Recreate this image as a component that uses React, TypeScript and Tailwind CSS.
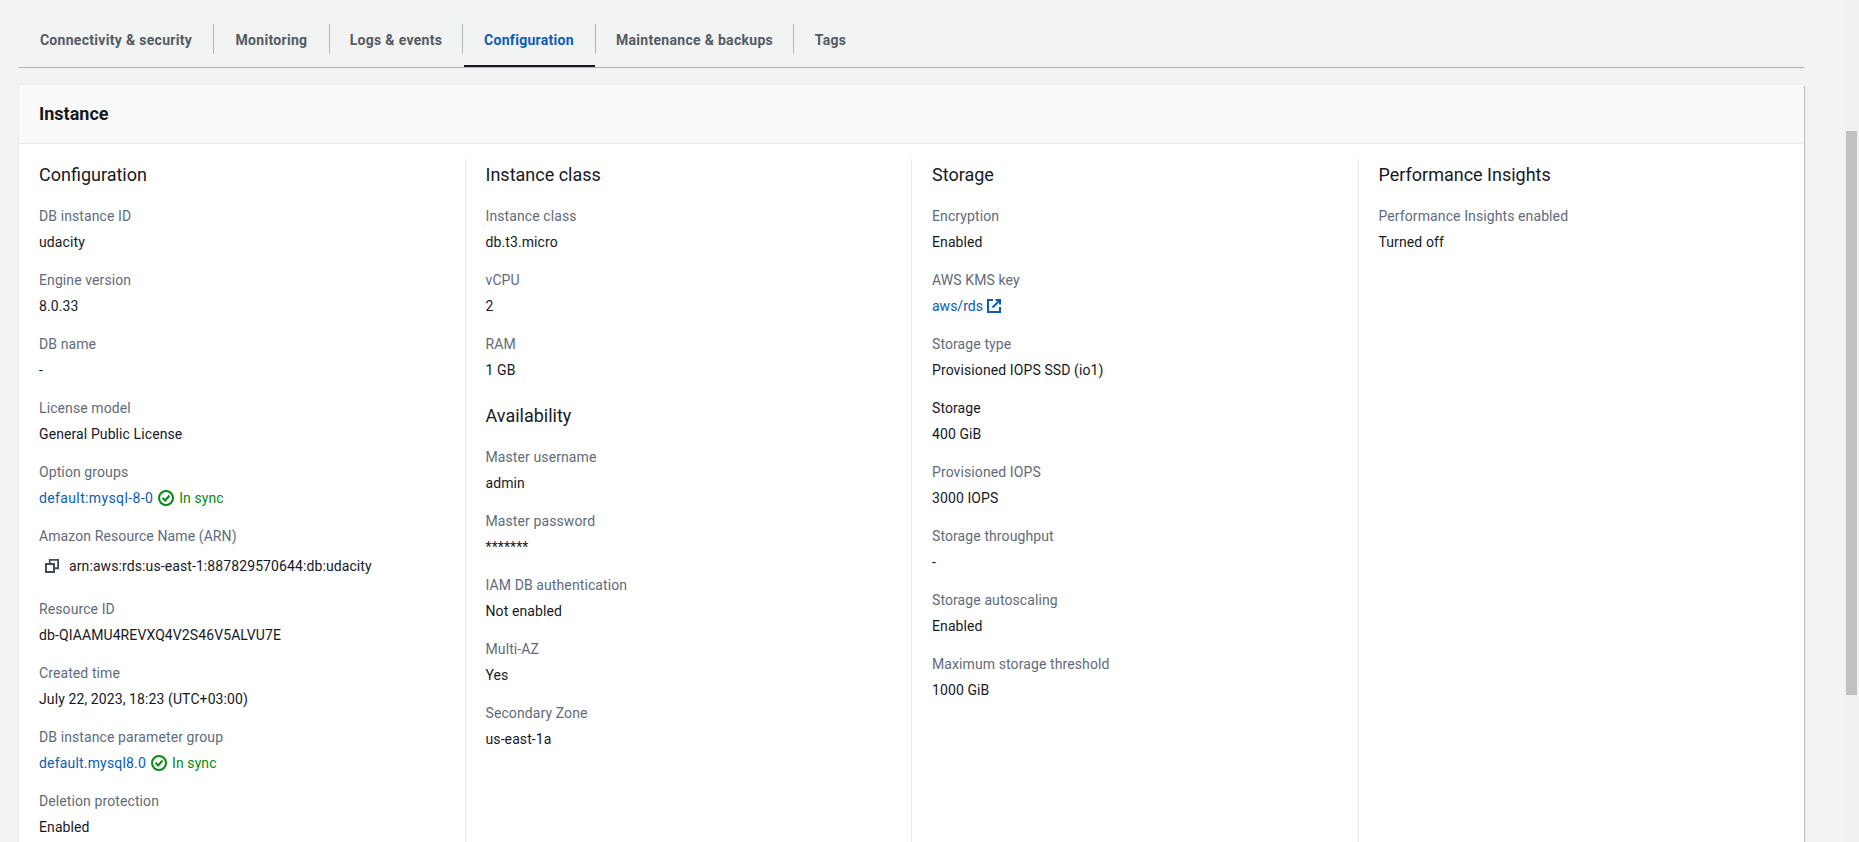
import React from "react";

const tabs: [string, string][] = [
  ["Connectivity & security", "w-[195px]"],
  ["Monitoring", "w-[116px]"],
  ["Logs & events", "w-[133px]"],
  ["Configuration", "w-[133px]"],
  ["Maintenance & backups", "w-[198px]"],
  ["Tags", "w-[73px]"],
];

function CheckIcon() {
  return (
    <svg width="16" height="16" viewBox="0 0 16 16" fill="none" stroke="#058a12" strokeWidth="2" className="shrink-0">
      <circle cx="8" cy="8" r="7" />
      <path d="M4.5 7.8 L7.2 10.5 L11.5 5.5" />
    </svg>
  );
}

function ExternalIcon() {
  return (
    <svg width="16" height="16" viewBox="0 0 16 16" fill="none" stroke="#0a5cb8" strokeWidth="2" className="shrink-0">
      <path d="M7 2 H2 V14 H14 V9" />
      <path d="M9.5 2 H14 V6.5" />
      <path d="M14 2 L6.5 9.5" />
    </svg>
  );
}

function CopyIcon() {
  return (
    <svg width="16" height="16" viewBox="0 0 16 16" fill="none" stroke="#414d5c" strokeWidth="2" className="shrink-0">
      <rect x="2" y="6" width="8" height="8" />
      <path d="M5.75 5 V1.9 H14.1 V10.25 H11" strokeWidth="1.8" />
    </svg>
  );
}

function Field({ label, children }: { label: string; children: React.ReactNode }) {
  return (
    <div className="mb-[18px]">
      <div className="mb-[6px] h-5 text-[#5f6b7a]">{label}</div>
      <div className="h-5 text-[#16191f]">{children}</div>
    </div>
  );
}

function Sync({ name, spacing }: { name: string; spacing: string }) {
  return (
    <div className="flex items-center">
      <span className={`text-[#0a5cb8] ${spacing}`}>{name}</span>
      <span className="mx-[5px]"><CheckIcon /></span>
      <span className="text-[#058a12]">In sync</span>
    </div>
  );
}

function Heading({ children, className = "" }: { children: React.ReactNode; className?: string }) {
  return (
    <h3 className={`mb-[15px] flex h-[32px] items-center text-[18px] leading-[22px] tracking-normal text-[#16191f] ${className}`}>
      {children}
    </h3>
  );
}

function Column({ children, last }: { children: React.ReactNode; last?: boolean }) {
  return (
    <div className={`min-w-0 flex-1 pl-5 pr-5 ${last ? "" : "border-r border-[#e9ebed]"}`}>{children}</div>
  );
}

export default function App() {
  return (
    <div
      className="flex h-[842px] w-full overflow-hidden bg-[#f2f3f3] text-[14px] leading-5 tracking-[0.1px]"
      style={{ fontFamily: "Roboto, sans-serif" }}
    >
      <main className="h-full min-w-0 flex-1 overflow-hidden pl-[19px] pr-[40px] pt-[24px]">
        <nav className="flex h-[44px] border-b border-[#aab7b8]">
          {tabs.map(([t, w], i) => (
            <div key={t} className={`relative h-[43px] shrink-0 ${w}`}>
              <div
                className={`flex h-[30px] items-center justify-center whitespace-nowrap pt-[1px] text-[14px] font-bold tracking-[0.3px] ${
                  t === "Configuration" ? "text-[#0a5cb8]" : "text-[#545b64]"
                } ${i === tabs.length - 1 ? "" : "border-r border-[#aab7b8]"}`}
              >
                {t}
              </div>
              {t === "Configuration" && <div className="absolute bottom-0 left-[1px] right-[1px] h-[2px] bg-[#16191f]" />}
            </div>
          ))}
        </nav>
        <section className="mt-[17px] bg-white shadow-[1px_1px_1px_0_rgba(0,28,36,0.2),0_0_1px_0_rgba(0,28,36,0.15)]">
          <header className="flex h-[59px] items-center border-b border-[#eaeded] bg-[#fafafa] px-5 text-[18px] font-bold leading-[22px] tracking-normal text-[#16191f]">
            Instance
          </header>
          <div className="flex pt-[15px]">
            <Column>
              <Heading>Configuration</Heading>
              <Field label="DB instance ID">udacity</Field>
              <Field label="Engine version">8.0.33</Field>
              <Field label="DB name">-</Field>
              <Field label="License model">General Public License</Field>
              <Field label="Option groups"><Sync name="default:mysql-8-0" spacing="tracking-[0.37px]" /></Field>
              <div className="mb-[18px]">
                <div className="mb-[5px] h-5 text-[#5f6b7a]">Amazon Resource Name (ARN)</div>
                <div className="flex h-[30px] items-center pl-[5px] text-[#16191f]">
                  <CopyIcon />
                  <span className="ml-[9px]">arn:aws:rds:us-east-1:887829570644:db:udacity</span>
                </div>
              </div>
              <Field label="Resource ID">db-QIAAMU4REVXQ4V2S46V5ALVU7E</Field>
              <Field label="Created time">July 22, 2023, 18:23 (UTC+03:00)</Field>
              <Field label="DB instance parameter group"><Sync name="default.mysql8.0" spacing="tracking-[0.18px]" /></Field>
              <Field label="Deletion protection">Enabled</Field>
            </Column>
            <Column>
              <Heading>Instance class</Heading>
              <Field label="Instance class">db.t3.micro</Field>
              <Field label="vCPU">2</Field>
              <Field label="RAM">1 GB</Field>
              <Heading className="mt-[20px]">Availability</Heading>
              <Field label="Master username">admin</Field>
              <Field label="Master password">*******</Field>
              <Field label="IAM DB authentication">Not enabled</Field>
              <Field label="Multi-AZ">Yes</Field>
              <Field label="Secondary Zone">us-east-1a</Field>
            </Column>
            <Column>
              <Heading>Storage</Heading>
              <Field label="Encryption">Enabled</Field>
              <Field label="AWS KMS key">
                <div className="flex items-center">
                  <span className="tracking-normal text-[#0a5cb8]">aws/rds</span>
                  <span className="ml-[3px]"><ExternalIcon /></span>
                </div>
              </Field>
              <Field label="Storage type">Provisioned IOPS SSD (io1)</Field>
              <div className="mb-[18px]">
                <div className="mb-[6px] h-5 text-[#16191f]">Storage</div>
                <div className="h-5 text-[#16191f]">400 GiB</div>
              </div>
              <Field label="Provisioned IOPS">3000 IOPS</Field>
              <Field label="Storage throughput">-</Field>
              <Field label="Storage autoscaling">Enabled</Field>
              <Field label="Maximum storage threshold">1000 GiB</Field>
            </Column>
            <Column last>
              <Heading>Performance Insights</Heading>
              <Field label="Performance Insights enabled">Turned off</Field>
            </Column>
          </div>
        </section>
      </main>
      <aside className="h-full w-[15px] shrink-0 bg-[#f1f1f1] pl-[2px] pr-[2px] pt-[131px]">
        <div className="h-[564px] w-[11px] bg-[#c1c1c1]" />
      </aside>
    </div>
  );
}
